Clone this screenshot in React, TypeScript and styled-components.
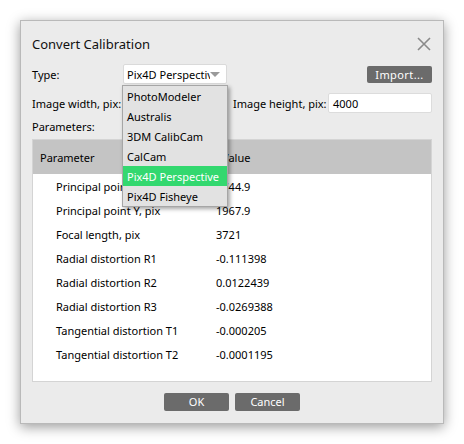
import React from "react";
import styled, { createGlobalStyle } from "styled-components";

const Global = createGlobalStyle`
  html, body { margin: 0; padding: 0; background: #ffffff; }
  body { font-family: "Noto Sans", "DejaVu Sans", sans-serif; font-size: 11px; color: #000; }
`;

const Page = styled.div`
  padding: 20px;
  width: 464px;
  height: 444px;
  box-sizing: border-box;
`;

const Dialog = styled.div`
  position: relative;
  width: 424px;
  height: 404px;
  box-sizing: border-box;
  background: #ebebeb;
  border: 1px solid #b9b9b9;
  box-shadow: 0 3px 12px rgba(0, 0, 0, 0.4);
  padding: 0 11px 0 11px;
  display: flex;
  flex-direction: column;
`;

const TitleBar = styled.div`
  height: 41px;
  display: flex;
  align-items: center;
  justify-content: space-between;
`;

const Title = styled.div`
  font-size: 13px;
  color: #111;
  padding-top: 5px;
`;

const CloseBtn = styled.div`
  width: 14px;
  height: 14px;
  margin-right: 1px;
  margin-top: 5px;
  display: flex;
`;

const Row = styled.div<{ $mt: number }>`
  margin-top: ${(p) => p.$mt}px;
  height: 20px;
  display: flex;
  align-items: center;
`;

const Label = styled.div<{ $w: number; $pl?: number }>`
  width: ${(p) => p.$w}px;
  padding-left: ${(p) => p.$pl ?? 0}px;
  box-sizing: border-box;
  flex: none;
  white-space: nowrap;
`;

const Combo = styled.div`
  position: relative;
  width: 104px;
  height: 20px;
  box-sizing: border-box;
  background: #fff;
  border: 1px solid #dadada;
  border-radius: 2px;
  display: flex;
  align-items: center;
  padding-left: 3px;
  overflow: hidden;
`;

const ComboText = styled.div`
  width: 83px;
  overflow: hidden;
  white-space: nowrap;
`;

const Arrow = styled.div`
  position: absolute;
  right: 6px;
  top: 7px;
  width: 0;
  height: 0;
  border-left: 5px solid transparent;
  border-right: 5px solid transparent;
  border-top: 5px solid #9a9a9a;
`;

const DarkButton = styled.button`
  height: 18px;
  width: 65px;
  border: none;
  border-radius: 2px;
  background: #6b6b6b;
  color: #fff;
  font-family: inherit;
  font-size: 11px;
  padding: 0;
  line-height: 18px;
`;

const ImportButton = styled(DarkButton)`
  margin-left: auto;
  height: 17px;
  line-height: 17px;
  letter-spacing: 0.4px;
`;

const Input = styled.div`
  width: 104px;
  height: 20px;
  box-sizing: border-box;
  background: #fff;
  border: 1px solid #dcdcdc;
  border-radius: 2px;
  padding-left: 4px;
  display: flex;
  align-items: center;
`;

const ParamsLabel = styled.div`
  height: 26px;
  display: flex;
  align-items: center;
`;

const Table = styled.div`
  height: 243px;
  box-sizing: border-box;
  background: #fff;
  border: 1px solid #d4d4d4;
  display: flex;
  flex-direction: column;
`;

const HeaderRow = styled.div`
  height: 34px;
  background: #c4c4c4;
  display: grid;
  grid-template-columns: 182px 1fr;
  align-items: center;
  padding-left: 7px;
  margin-bottom: 1px;
`;

const DataRow = styled.div`
  height: 24px;
  display: grid;
  grid-template-columns: 160px 1fr;
  align-items: center;
  padding-left: 23px;
  padding-bottom: 2px;
  box-sizing: border-box;
  white-space: nowrap;
`;

const Footer = styled.div`
  flex: 1;
  display: flex;
  justify-content: center;
  align-items: flex-start;
  padding-top: 11px;
  gap: 6px;
`;

const Dropdown = styled.div`
  position: absolute;
  left: 101px;
  top: 64px;
  width: 106px;
  box-sizing: border-box;
  background: #e2e2e2;
  border: 1px solid #a6a6a6;
  box-shadow: 2px 2px 4px rgba(0, 0, 0, 0.35);
`;

const Item = styled.div<{ $active?: boolean }>`
  height: 20px;
  display: flex;
  align-items: center;
  padding-left: 4px;
  white-space: nowrap;
  background: ${(p) => (p.$active ? "#33d86f" : "transparent")};
  color: ${(p) => (p.$active ? "#fff" : "#000")};
`;

const rows: [string, string][] = [
  ["Principal point X, pix", "2744.9"],
  ["Principal point Y, pix", "1967.9"],
  ["Focal length, pix", "3721"],
  ["Radial distortion R1", "-0.111398"],
  ["Radial distortion R2", "0.0122439"],
  ["Radial distortion R3", "-0.0269388"],
  ["Tangential distortion T1", "-0.000205"],
  ["Tangential distortion T2", "-0.0001195"],
];

const items = ["PhotoModeler", "Australis", "3DM CalibCam", "CalCam", "Pix4D Perspective", "Pix4D Fisheye"];

export default function App() {
  return (
    <>
      <Global />
      <Page>
        <Dialog>
          <TitleBar>
            <Title>Convert Calibration</Title>
            <CloseBtn>
              <svg width="14" height="14" viewBox="0 0 14 14">
                <path d="M1 1 L13 13 M13 1 L1 13" stroke="#8a8a8a" strokeWidth="1.6" fill="none" />
              </svg>
            </CloseBtn>
          </TitleBar>
          <Row $mt={2}>
            <Label $w={91}>Type:</Label>
            <Combo>
              <ComboText>Pix4D Perspective</ComboText>
              <Arrow />
            </Combo>
            <ImportButton>Import...</ImportButton>
          </Row>
          <Row $mt={9}>
            <Label $w={91}>Image width, pix:</Label>
            <Input>4000</Input>
            <Label $w={101} $pl={6}>Image height, pix:</Label>
            <Input>4000</Input>
          </Row>
          <ParamsLabel>Parameters:</ParamsLabel>
          <Table>
            <HeaderRow>
              <div>Parameter</div>
              <div>Value</div>
            </HeaderRow>
            {rows.map(([k, v]) => (
              <DataRow key={k}>
                <div>{k}</div>
                <div>{v}</div>
              </DataRow>
            ))}
          </Table>
          <Footer>
            <DarkButton>OK</DarkButton>
            <DarkButton>Cancel</DarkButton>
          </Footer>
          <Dropdown>
            {items.map((it) => (
              <Item key={it} $active={it === "Pix4D Perspective"}>
                {it}
              </Item>
            ))}
          </Dropdown>
        </Dialog>
      </Page>
    </>
  );
}
